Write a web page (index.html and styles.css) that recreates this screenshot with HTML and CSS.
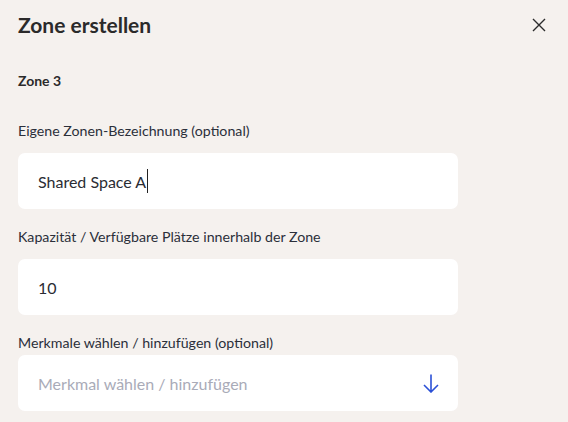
FILE: index.html
```html
<!DOCTYPE html>
<html lang="de">
<head>
<meta charset="utf-8">
<link rel="stylesheet" href="styles.css">
</head>
<body>
<div class="panel">
  <header class="header">
    <h1 class="title">Zone erstellen</h1>
    <button class="close" aria-label="Schließen">
      <svg width="14" height="14" viewBox="0 0 14 14"><path d="M1 1L13 13M13 1L1 13" stroke="#2b2b2b" stroke-width="1.4" fill="none"/></svg>
    </button>
  </header>
  <h2 class="subtitle">Zone 3</h2>
  <div class="field">
    <label class="label">Eigene Zonen-Bezeichnung (optional)</label>
    <div class="input"><span class="value">Shared Space A</span><span class="caret"></span></div>
  </div>
  <div class="field">
    <label class="label">Kapazität / Verfügbare Plätze innerhalb der Zone</label>
    <div class="input"><span class="value">10</span></div>
  </div>
  <div class="field field-tight">
    <label class="label">Merkmale wählen / hinzufügen (optional)</label>
    <div class="input select"><span class="placeholder">Merkmal wählen / hinzufügen</span>
      <svg class="arrow" width="16" height="19" viewBox="0 0 16 19"><path d="M8 0.5V18M1 11L8 18L15 11" stroke="#2b50d6" stroke-width="1.6" fill="none"/></svg>
    </div>
  </div>
</div>
</body>
</html>
```
FILE: styles.css
```css
* { box-sizing: border-box; }
html, body { margin: 0; padding: 0; }
body {
  background: #f5f1ee;
  font-family: "Lato", "Noto Sans", sans-serif;
  color: #2a2c33;
  width: 568px;
  height: 422px;
  overflow: hidden;
}
.panel { padding: 10px 22px 0 18px; }
.header {
  display: flex;
  justify-content: space-between;
  align-items: center;
  height: 30px;
}
.title {
  margin: 0;
  font-size: 21px;
  font-weight: 700;
  line-height: 30px;
  color: #2b2a2a;
}
.close {
  border: 0;
  background: none;
  padding: 0;
  width: 14px;
  height: 14px;
  display: flex;
}
.subtitle {
  margin: 32px 0 0;
  font-size: 14px;
  font-weight: 700;
  line-height: 18px;
  color: #2b2a2a;
}
.field { margin-top: 30px; }
.field + .field { margin-top: 17px; }
.label {
  display: block;
  padding-top: 2px;
  font-size: 14.2px;
  line-height: 18px;
  color: #2b2f3a;
}
.input {
  margin-top: 13px;
  width: 440px;
  height: 56px;
  background: #fff;
  border-radius: 7px;
  padding: 0 20px;
  display: flex;
  align-items: center;
  font-size: 16px;
  color: #2a2c33;
}
.field-tight .input { margin-top: 3px; }
.caret {
  display: inline-block;
  width: 1px;
  height: 24px;
  background: #222;
  margin-left: 1px;
}
.select { justify-content: space-between; padding-right: 19px; }
.placeholder { color: #a9abb8; }
.arrow { display: block; }
```
